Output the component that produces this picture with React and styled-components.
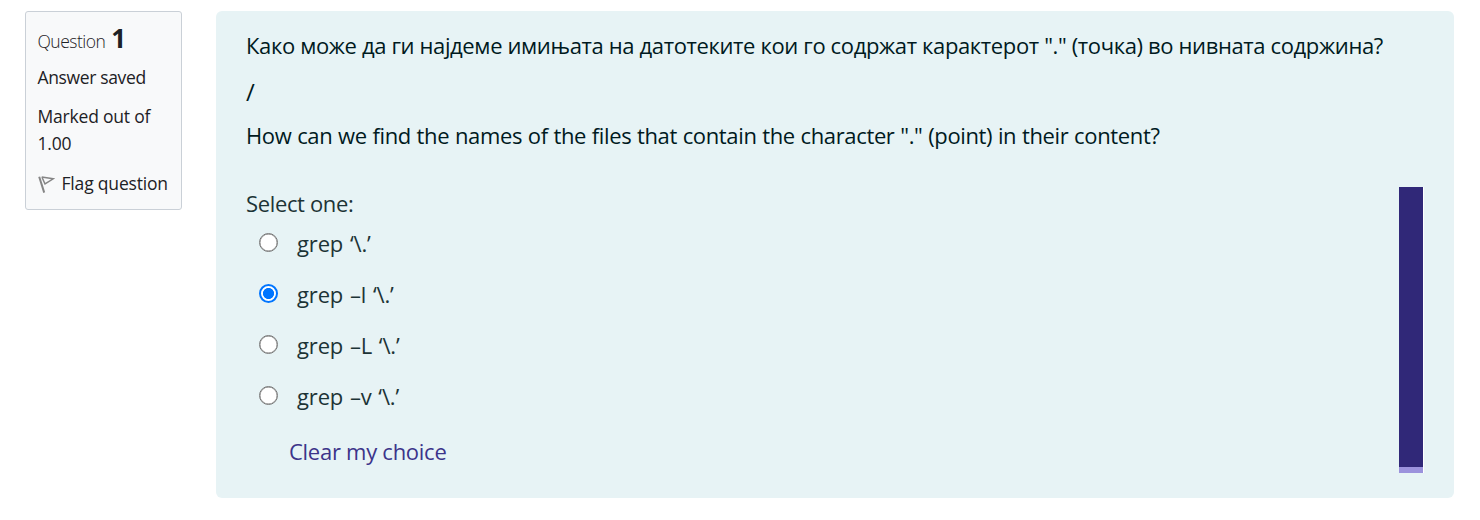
import React, { useState } from "react";
import styled, { createGlobalStyle } from "styled-components";

const GlobalStyle = createGlobalStyle`
  *, *::before, *::after { box-sizing: border-box; }
  body {
    margin: 0;
    background: #fff;
    color: #1d2125;
    font-family: "Segoe UI", "Open Sans", "Noto Sans", sans-serif;
  }
  p { margin: 0; }
`;

const Page = styled.main`
  display: flex;
  align-items: flex-start;
  gap: 34px;
  width: 1480px;
  height: 520px;
  padding: 11px 26px 0 25px;
`;

const InfoCard = styled.aside`
  flex: none;
  width: 157px;
  height: 199px;
  padding: 8px 0 0 11.5px;
  border: 1px solid #cad0d7;
  border-radius: 3px;
  background: #f8f9fa;
  font-size: 17.5px;
  line-height: 27px;
  white-space: nowrap;
`;

const QuestionNo = styled.h3`
  display: flex;
  align-items: baseline;
  gap: 6px;
  height: 36px;
  margin: 0;
  font-size: 17.5px;
  font-weight: 300;
  line-height: 36px;
  letter-spacing: -0.52px;
`;

const Number = styled.span`
  font-size: 26px;
  font-weight: 700;
  letter-spacing: 0;
`;

const InfoLine = styled.div`
  margin-top: ${(p) => p.$gap}px;
  letter-spacing: ${(p) => p.$track || 0}px;
`;

const FlagRow = styled.div`
  display: flex;
  align-items: center;
  gap: 7px;
  margin-top: 13px;
  letter-spacing: -0.18px;
`;

const Formulation = styled.section`
  flex: 1;
  height: 487px;
  padding: 17px 31px 0 30px;
  border-radius: 6px;
  background: #e7f3f5;
  color: #001a1e;
  font-size: 22px;
  line-height: 34px;
  white-space: nowrap;
`;

const Paragraph = styled.p`
  height: 34px;
  margin-bottom: 11px;
  letter-spacing: ${(p) => p.$track || 0}px;
  word-spacing: ${(p) => p.$word || 0}px;
`;

const Separator = styled(Paragraph)`
  font-size: 24px;
  line-height: 37px;
`;

const AnswerArea = styled.div`
  display: flex;
  justify-content: space-between;
  margin-top: 35px;
`;

const Answers = styled.div`
  color: #1c3336;
`;

const Prompt = styled.div`
  height: 33px;
  margin-top: -1px;
  letter-spacing: -0.35px;
`;

const Option = styled.label`
  display: flex;
  align-items: center;
  gap: 19px;
  height: 34px;
  margin: ${(p) => (p.$first ? 7 : 17)}px 0 0 13px;
  letter-spacing: -0.15px;
  word-spacing: 1.2px;
`;

const Radio = styled.input`
  appearance: none;
  width: 19px;
  height: 19px;
  margin: 0 0 1px;
  border: 1.5px solid #767676;
  border-radius: 50%;
  background: #fff;
  box-shadow: inset 0 0 0 0.4px #767676;

  &:checked {
    border: 2px solid #0075ff;
    background: radial-gradient(circle, #0075ff 5.2px, #fff 5.9px);
    box-shadow: none;
  }
`;

const ClearLink = styled.a`
  display: block;
  height: 34px;
  margin: 21px 0 0 43px;
  color: #3c348a;
  letter-spacing: -0.27px;
  cursor: pointer;
`;

const Strip = styled.div`
  width: 24px;
  height: 286px;
  border-bottom: 6px solid #9b92dc;
  background: #302878;
  box-shadow: 1px 0 0 #fff;
`;

const options = ["grep ‘\\.’", "grep –l ‘\\.’", "grep –L ‘\\.’", "grep –v ‘\\.’"];

function FlagIcon() {
  return (
    <svg width="17" height="18" viewBox="0 0 17 18" fill="none" stroke="#858585">
      <path d="M1.2 1.8 6.2 17.6" strokeWidth="2" />
      <path d="M3.7 2 15.3 3.8 7 9 4 2.2" strokeWidth="1.5" />
    </svg>
  );
}

export default function App() {
  const [selected, setSelected] = useState(1);
  return (
    <>
      <GlobalStyle />
      <Page>
        <InfoCard>
          <QuestionNo>
            <span>Question</span>
            <Number>1</Number>
          </QuestionNo>
          <InfoLine $gap={8} $track={-0.36}>Answer saved</InfoLine>
          <InfoLine $gap={12} $track={-0.2}>
            Marked out of
            <br />
            1.00
          </InfoLine>
          <FlagRow>
            <FlagIcon />
            <span>Flag question</span>
          </FlagRow>
        </InfoCard>
        <Formulation>
          <Paragraph $track={-0.365}>
            Како може да ги најдеме имињата на датотеките кои го содржат карактерот "." (точка) во нивната содржина?
          </Paragraph>
          <Separator>/</Separator>
          <Paragraph $track={-0.36} $word={0.36}>
            How can we find the names of the files that contain the character "." (point) in their content?
          </Paragraph>
          <AnswerArea>
            <Answers>
              <Prompt>Select one:</Prompt>
              {options.map((text, i) => (
                <Option key={text} $first={i === 0}>
                  <Radio type="radio" name="answer" checked={selected === i} onChange={() => setSelected(i)} />
                  <span>{text}</span>
                </Option>
              ))}
              <ClearLink onClick={() => setSelected(-1)}>Clear my choice</ClearLink>
            </Answers>
            <Strip />
          </AnswerArea>
        </Formulation>
      </Page>
    </>
  );
}
